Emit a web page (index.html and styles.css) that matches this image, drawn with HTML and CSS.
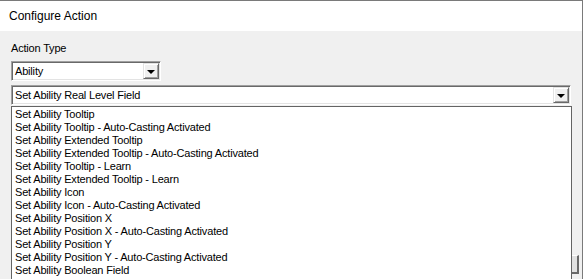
FILE: index.html
```html
<!DOCTYPE html>
<html lang="en">
<head>
  <meta charset="UTF-8">
  <title>Configure Action</title>
  <link rel="stylesheet" href="styles.css">
</head>
<body>
  <div class="window">
    <div class="titlebar">Configure Action</div>
    <div class="content">
      <div class="label">Action Type</div>
      <div class="combo combo-small">
        <span class="combo-text">Ability</span>
        <span class="combo-btn"><span class="arrow"></span></span>
      </div>
      <div class="combo combo-wide">
        <span class="combo-text">Set Ability Real Level Field</span>
        <span class="combo-btn"><span class="arrow"></span></span>
      </div>
      <ul class="droplist">
        <li>Set Ability Tooltip</li>
        <li>Set Ability Tooltip - Auto-Casting Activated</li>
        <li>Set Ability Extended Tooltip</li>
        <li>Set Ability Extended Tooltip - Auto-Casting Activated</li>
        <li>Set Ability Tooltip - Learn</li>
        <li>Set Ability Extended Tooltip - Learn</li>
        <li>Set Ability Icon</li>
        <li>Set Ability Icon - Auto-Casting Activated</li>
        <li>Set Ability Position X</li>
        <li>Set Ability Position X - Auto-Casting Activated</li>
        <li>Set Ability Position Y</li>
        <li>Set Ability Position Y - Auto-Casting Activated</li>
        <li>Set Ability Boolean Field</li>
        <li>Set Ability Integer Field</li>
      </ul>
      <div class="hidden-btn"></div>
    </div>
  </div>
</body>
</html>
```

FILE: styles.css
```css
html, body {
  margin: 0;
  height: 100%;
  overflow: hidden;
}
body {
  font-family: 'Liberation Sans', Arial, sans-serif;
  background-color: #f0f0f0;
  color: #000;
}
.window {
  height: 100%;
  border-top: 1px solid #7a7a7a;
  border-right: 1px solid #7a7a7a;
  background-color: #f0f0f0;
  box-sizing: border-box;
}
.titlebar {
  height: 30px;
  background-color: #fff;
  padding-left: 9px;
  font-size: 12px;
  line-height: 31px;
}
.content {
  position: relative;
  padding: 9px 0 0 11px;
  font-size: 11px;
  letter-spacing: -0.18px;
}
.label {
  height: 21px;
  line-height: 17px;
}
.combo {
  display: flex;
  align-items: center;
  height: 20px;
  box-sizing: border-box;
  background-color: #fff;
  border-top: 1px solid #a0a0a0;
  border-left: 1px solid #a0a0a0;
  border-bottom: 1px solid #fff;
  border-right: 1px solid #fff;
  box-shadow: inset 1px 1px 0 #696969, inset -1px -1px 0 #e3e3e3;
}
.combo-small {
  width: 150px;
  margin-bottom: 4px;
}
.combo-wide {
  width: 560px;
  margin-bottom: 1px;
}
.combo-text {
  flex: 1;
  padding-left: 3px;
}
.combo-btn {
  display: flex;
  align-items: center;
  justify-content: center;
  width: 16px;
  height: 16px;
  margin-right: 1px;
  box-sizing: border-box;
  background-color: #f0f0f0;
  border-top: 1px solid #e3e3e3;
  border-left: 1px solid #e3e3e3;
  border-bottom: 1px solid #696969;
  border-right: 1px solid #696969;
  box-shadow: inset 1px 1px 0 #fff, inset -1px -1px 0 #a0a0a0;
}
.arrow {
  width: 0;
  height: 0;
  border-left: 4px solid transparent;
  border-right: 4px solid transparent;
  border-top: 4px solid #000;
  margin-top: 1px;
}
.droplist {
  position: relative;
  z-index: 1;
  list-style: none;
  margin: 0;
  padding: 1px 0 0 3px;
  width: 561px;
  height: 200px;
  box-sizing: border-box;
  background-color: #fff;
  border: 1px solid #646464;
}
.droplist li {
  height: 13px;
  line-height: 13px;
  white-space: nowrap;
}
.hidden-btn {
  position: absolute;
  left: 560px;
  top: 224px;
  width: 19px;
  height: 19px;
  box-sizing: border-box;
  border-top: 1px solid #fff;
  border-left: 1px solid #fff;
  border-right: 2px solid #696969;
  border-bottom: 2px solid #696969;
  background-color: #e1e1e1;
}
```
